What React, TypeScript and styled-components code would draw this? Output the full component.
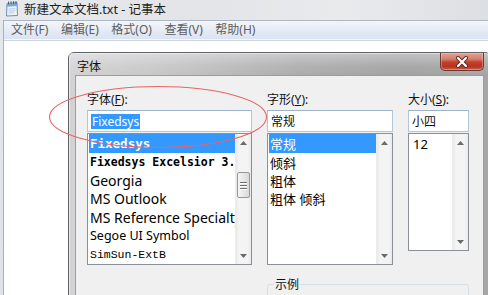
import React from 'react';
import styled, { createGlobalStyle } from 'styled-components';

const Global = createGlobalStyle`
  html, body { margin: 0; padding: 0; width: 488px; height: 295px; overflow: hidden; background: #fff; }
  body { font-family: "Noto Sans CJK SC", "Noto Sans", sans-serif; }
  * { box-sizing: border-box; }
`;

const CJK = `"Noto Sans", "Noto Sans CJK SC", sans-serif`;

const Screen = styled.div`
  position: relative;
  width: 488px;
  height: 295px;
  overflow: hidden;
`;

const NotepadWindow = styled.div`
  display: flex;
  flex-direction: column;
  width: 100%;
  height: 100%;
  background: linear-gradient(180deg, #e4e7eb 0%, #dfe3e8 100%);
`;

const WinTitleBar = styled.div`
  height: 20px;
  display: flex;
  align-items: center;
  gap: 5px;
  padding: 0 0 3px 4px;
  font-family: ${CJK};
  font-size: 12.5px;
  color: #1e1e1e;
  background: linear-gradient(90deg, #e7e9ec 0%, #e2e4e7 40%, #e9eaec 70%, #dcdfe3 100%);
`;

const WinBody = styled.div`
  flex: 1;
  display: flex;
  flex-direction: column;
  margin-left: 3px;
  border-left: 1px solid #a9b1bb;
  border-top: 1px solid #aeb6c1;
  background: #fff;
`;

const MenuBar = styled.div`
  height: 19px;
  display: flex;
  align-items: center;
  padding-left: 1px;
  background: linear-gradient(180deg, #f3f6fb 0%, #e6ecf6 50%, #dae3f1 100%);
  border-bottom: 1px solid #f4f6f9;
`;

const MenuItem = styled.span`
  padding: 0 6.5px 0 6px;
  font-family: ${CJK};
  font-size: 12px;
  color: #5c5c5c;
  line-height: 18px;
`;

const Editor = styled.div`
  flex: 1;
  background: #fff;
  border-top: 1px solid #d0d5dc;
`;

const Dialog = styled.div`
  position: absolute;
  left: 68px;
  top: 52px;
  width: 423px;
  height: 260px;
  display: flex;
  flex-direction: column;
  border: 1px solid #5f6368;
  border-radius: 6px 6px 0 0;
  background: linear-gradient(90deg, #d3d3d3 0%, #c4c4c4 25%, #acacac 55%, #a2a2a2 80%, #a6a6a6 100%);
  box-shadow: inset 0 0 0 1px rgba(255, 255, 255, 0.45);
`;

const DialogTitleBar = styled.div`
  height: 25px;
  display: flex;
  justify-content: space-between;
  align-items: flex-start;
  padding: 0 6px 0 8px;
  background: linear-gradient(180deg, rgba(255,255,255,0.35) 0%, rgba(255,255,255,0.08) 60%, rgba(255,255,255,0) 100%);
`;

const DialogTitle = styled.span`
  font-family: ${CJK};
  font-size: 12px;
  color: #111;
  line-height: 16px;
  margin-top: 6px;
`;

const CloseButton = styled.div`
  width: 44px;
  height: 18px;
  display: flex;
  align-items: center;
  justify-content: center;
  border: 1px solid #6d3a32;
  border-top: none;
  border-radius: 0 0 5px 5px;
  background: linear-gradient(180deg, #e3a090 0%, #d4806e 35%, #c13e2a 55%, #b53522 80%, #c9634a 100%);
  box-shadow: inset 0 0 0 1px rgba(255, 220, 210, 0.35);
`;

const Client = styled.div`
  flex: 1;
  margin: 0 6px;
  border: 1px solid #9d9d9d;
  border-bottom: none;
  background: #f0f0f0;
  padding: 16px 0 0 11px;
`;

const FieldGrid = styled.div`
  display: grid;
  grid-template-columns: 165px 126px 61px;
  column-gap: 15px;
  align-items: start;
`;

const Column = styled.div`
  display: flex;
  flex-direction: column;
`;

const FieldLabel = styled.div`
  font-family: ${CJK};
  font-size: 12px;
  line-height: 16px;
  height: 16px;
  color: #111;
  margin-bottom: 2px;
  u { text-decoration: underline; text-underline-offset: 1px; }
`;

const TextBox = styled.div`
  height: 22px;
  display: flex;
  align-items: center;
  padding: 0 3px;
  background: #fff;
  border: 1px solid #b4c6da;
  border-top-color: #9fb3c9;
  margin-bottom: 1px;
  font-family: ${CJK};
  font-size: 12px;
  color: #111;
`;

const Selection = styled.span`
  background: #3399ff;
  color: #fff;
  padding: 0 1px;
  line-height: 15px;
  font-family: "Noto Sans", sans-serif;
  font-size: 12px;
`;

const ListBox = styled.div<{ $h: number }>`
  height: ${(p) => p.$h}px;
  display: flex;
  background: #fff;
  border: 1px solid #8b8f96;
`;

const Items = styled.div`
  flex: 1;
  min-width: 0;
  overflow: hidden;
  padding: 0 0 0 1px;
`;

const Item = styled.div<{ $font?: string; $size?: number; $bold?: boolean; $sel?: boolean; $h?: number; $indent?: number }>`
  height: ${(p) => p.$h ?? 18.4}px;
  display: flex;
  align-items: center;
  white-space: nowrap;
  overflow: hidden;
  padding-left: ${(p) => p.$indent ?? 1}px;
  font-family: ${(p) => p.$font ?? CJK};
  font-size: ${(p) => p.$size ?? 13}px;
  font-weight: ${(p) => (p.$bold ? 700 : 400)};
  color: ${(p) => (p.$sel ? '#fff' : '#000')};
  background: ${(p) => (p.$sel ? '#3399ff' : 'transparent')};
`;

const ScrollBar = styled.div`
  width: 16px;
  display: flex;
  flex-direction: column;
  background: linear-gradient(90deg, #e9e9e9 0%, #f4f4f4 20%, #f4f4f4 80%, #e9e9e9 100%);
  border-left: 1px solid #ececec;
`;

const ArrowButton = styled.div`
  height: 17px;
  display: flex;
  align-items: center;
  justify-content: center;
`;

const Track = styled.div`
  flex: 1;
  display: flex;
  flex-direction: column;
  align-items: center;
`;

const Thumb = styled.div<{ $top: number; $h: number }>`
  margin-top: ${(p) => p.$top}px;
  width: 13px;
  height: ${(p) => p.$h}px;
  border: 1px solid #979797;
  border-radius: 2px;
  background: linear-gradient(90deg, #f4f4f4 0%, #e8e8e8 50%, #d9d9d9 100%);
  display: flex;
  flex-direction: column;
  align-items: center;
  justify-content: center;
  gap: 2px;
`;

const Grip = styled.div`
  width: 7px;
  height: 1px;
  background: #6e6e6e;
  box-shadow: 0 1px 0 #fff;
`;

const SampleRow = styled.div`
  grid-column: 2 / 4;
  margin-top: 19px;
  height: 40px;
  border: 1px solid #d5dfe5;
  border-radius: 3px;
  position: relative;
`;

const SampleLegend = styled.span`
  position: absolute;
  left: 6px;
  top: -7px;
  padding: 0 1px;
  background: #f0f0f0;
  font-family: ${CJK};
  font-size: 12px;
  line-height: 14px;
  color: #111;
`;

const Annotation = styled.svg`
  position: absolute;
  left: 0;
  top: 0;
  pointer-events: none;
`;

const Arrow = ({ up }: { up?: boolean }) => (
  <svg width="7" height="4" viewBox="0 0 7 4">
    <polygon points={up ? '3.5,0 7,4 0,4' : '0,0 7,0 3.5,4'} fill="#6a6a6a" />
  </svg>
);

const Scroll = ({ thumb }: { thumb?: { top: number; h: number } }) => (
  <ScrollBar>
    <ArrowButton><Arrow up /></ArrowButton>
    <Track>
      {thumb && (
        <Thumb $top={thumb.top} $h={thumb.h}>
          <Grip /><Grip /><Grip />
        </Thumb>
      )}
    </Track>
    <ArrowButton><Arrow /></ArrowButton>
  </ScrollBar>
);

const NotepadIcon = () => (
  <svg width="15" height="16" viewBox="0 0 15 16">
    <path d="M3 2.5 L13 1.5 L13.5 14.5 L2.5 15 Z" fill="#eaf3fc" stroke="#6d8db3" strokeWidth="1" />
    <path d="M3 2.5 L13 1.5 L13.2 5 L3 5.8 Z" fill="#7fa9d6" />
    <path d="M4.5 8 L11.5 7.6 M4.5 10 L11.5 9.6 M4.5 12 L10 11.7" stroke="#a9c2dc" strokeWidth="0.8" />
    <path d="M4.5 0.5 v3 M7 0.3 v3 M9.5 0.2 v3 M12 0.1 v3" stroke="#4d5f78" strokeWidth="1" />
  </svg>
);

const CloseX = () => (
  <svg width="14" height="12" viewBox="0 0 14 12">
    <path d="M3 2 L11 10 M11 2 L3 10" stroke="#5a2a22" strokeWidth="4" strokeLinecap="round" />
    <path d="M3 2 L11 10 M11 2 L3 10" stroke="#fff" strokeWidth="2.2" strokeLinecap="round" />
  </svg>
);

const MONO = `"DejaVu Sans Mono", monospace`;
const SANS = `"Noto Sans", sans-serif`;

export default function App() {
  return (
    <Screen>
      <Global />
      <NotepadWindow>
        <WinTitleBar>
          <NotepadIcon />
          <span>新建文本文档.txt - 记事本</span>
        </WinTitleBar>
        <WinBody>
          <MenuBar>
            <MenuItem>文件(F)</MenuItem>
            <MenuItem>编辑(E)</MenuItem>
            <MenuItem>格式(O)</MenuItem>
            <MenuItem>查看(V)</MenuItem>
            <MenuItem>帮助(H)</MenuItem>
          </MenuBar>
          <Editor />
        </WinBody>
      </NotepadWindow>

      <Dialog>
        <DialogTitleBar>
          <DialogTitle>字体</DialogTitle>
          <CloseButton><CloseX /></CloseButton>
        </DialogTitleBar>
        <Client>
          <FieldGrid>
            <Column>
              <FieldLabel>字体(<u>F</u>):</FieldLabel>
              <TextBox><Selection>Fixedsys</Selection></TextBox>
              <ListBox $h={132}>
                <Items>
                  <Item $sel $font={MONO} $size={12.5} $bold $h={19}>Fixedsys</Item>
                  <Item $font={MONO} $size={11.5} $bold>Fixedsys Excelsior 3.01</Item>
                  <Item $font={SANS} $size={14}>Georgia</Item>
                  <Item $font={SANS} $size={14}>MS Outlook</Item>
                  <Item $font={SANS} $size={14}>MS Reference Specialty</Item>
                  <Item $font={SANS} $size={12.5}>Segoe UI Symbol</Item>
                  <Item $font={`"Liberation Mono", monospace`} $size={11.5}>SimSun-ExtB</Item>
                </Items>
                <Scroll thumb={{ top: 21, h: 26 }} />
              </ListBox>
            </Column>
            <Column>
              <FieldLabel>字形(<u>Y</u>):</FieldLabel>
              <TextBox>常规</TextBox>
              <ListBox $h={132}>
                <Items>
                  <Item $sel $h={19}>常规</Item>
                  <Item>倾斜</Item>
                  <Item>粗体</Item>
                  <Item>粗体 倾斜</Item>
                </Items>
                <Scroll />
              </ListBox>
            </Column>
            <Column>
              <FieldLabel>大小(<u>S</u>):</FieldLabel>
              <TextBox>小四</TextBox>
              <ListBox $h={118}>
                <Items>
                  <Item $h={19} $indent={3}>12</Item>
                </Items>
                <Scroll />
              </ListBox>
            </Column>
            <SampleRow>
              <SampleLegend>示例</SampleLegend>
            </SampleRow>
          </FieldGrid>
        </Client>
      </Dialog>

      <Annotation width="488" height="295" viewBox="0 0 488 295">
        <ellipse cx="158" cy="117" rx="108.5" ry="30.5" fill="none" stroke="#e86466" strokeWidth="1.1" />
      </Annotation>
    </Screen>
  );
}
